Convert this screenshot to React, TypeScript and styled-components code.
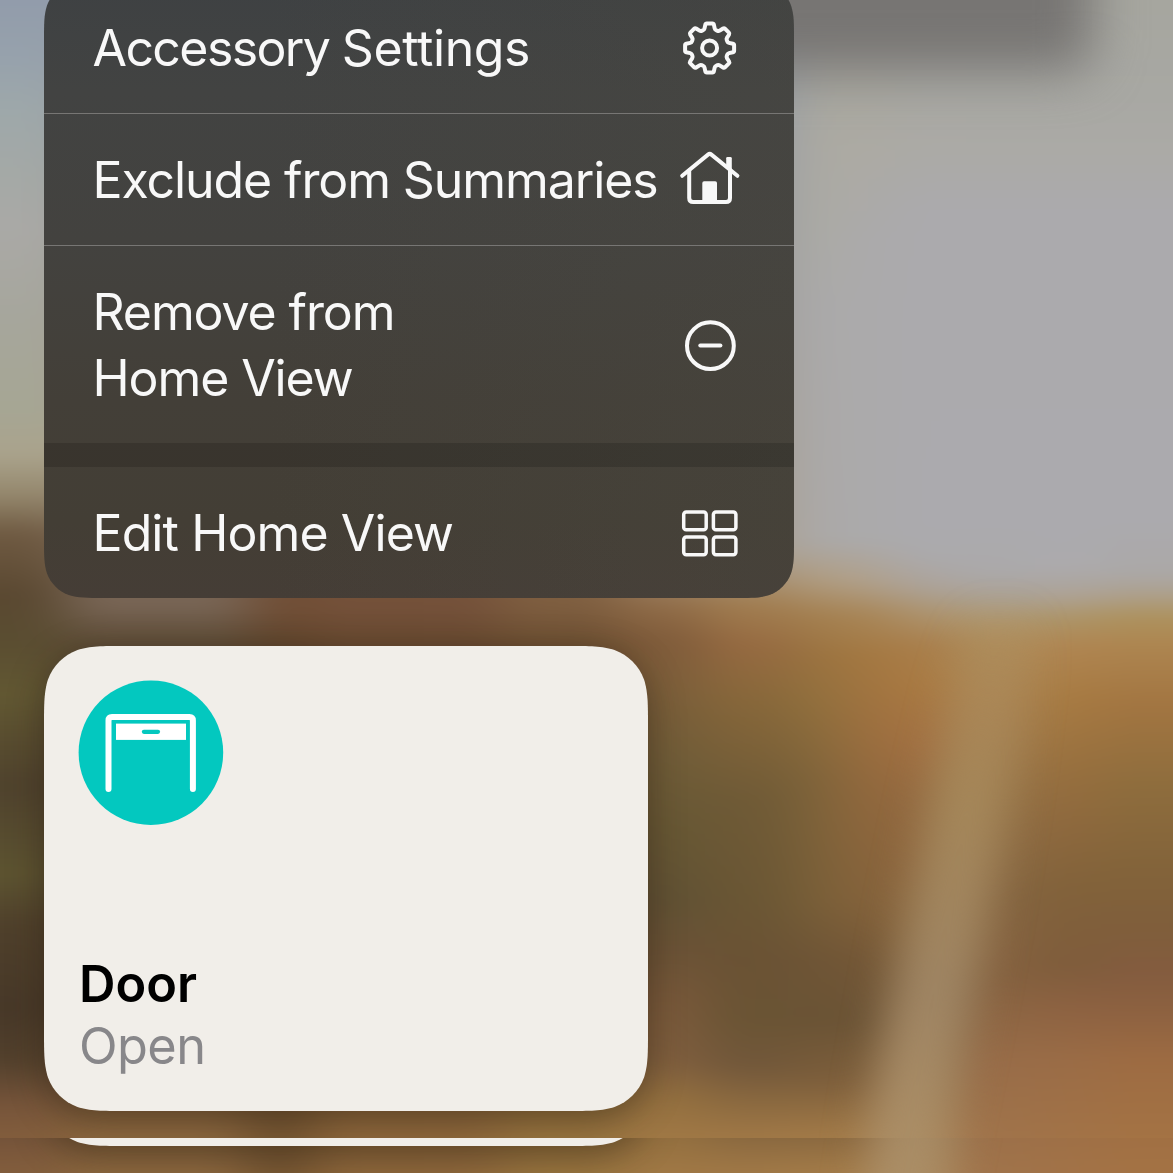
import React, { useId } from 'react';
import styled, { createGlobalStyle } from 'styled-components';

const GlobalStyle = createGlobalStyle`
  html, body { margin: 0; padding: 0; background: #6f5a3c; }
  * { box-sizing: border-box; }
`;

/* Continuous-curvature corner outline, as on iOS panels. */
function squircle(w: number, h: number, r: number): string {
  const a = 1.528665 * r, b = 1.088493 * r, c = 0.868407 * r;
  const d = 0.631494 * r, e = 0.074911 * r, f = 0.372824 * r, g = 0.16906 * r;
  return [
    `M${a} 0 L${w - a} 0`,
    `C${w - b} 0 ${w - c} 0 ${w - d} ${e} C${w - f} ${g} ${w - g} ${f} ${w - e} ${d} C${w} ${c} ${w} ${b} ${w} ${a}`,
    `L${w} ${h - a}`,
    `C${w} ${h - b} ${w} ${h - c} ${w - e} ${h - d} C${w - g} ${h - f} ${w - f} ${h - g} ${w - d} ${h - e} C${w - c} ${h} ${w - b} ${h} ${w - a} ${h}`,
    `L${a} ${h}`,
    `C${b} ${h} ${c} ${h} ${d} ${h - e} C${f} ${h - g} ${g} ${h - f} ${e} ${h - d} C0 ${h - c} 0 ${h - b} 0 ${h - a}`,
    `L0 ${a}`,
    `C0 ${b} 0 ${c} ${e} ${d} C${g} ${f} ${f} ${g} ${d} ${e} C${c} 0 ${b} 0 ${a} 0 Z`,
  ].join(' ');
}

type Stop = [number, string];
interface Band { x: number; w: number; stops: Stop[] }

const sky: Stop[] = [[0, '#a6a69f'], [90, '#a8a8a3'], [150, '#abaaa6'], [210, '#abaaad'], [520, '#abaaae']];

const bands: Band[] = [
  { x: -120, w: 185, stops: [[0, '#929cab'], [60, '#97a2ac'], [110, '#9ea8aa'], [180, '#a5a9a6'], [230, '#aaa9a6'], [320, '#a6a69c'], [410, '#a6a694'], [455, '#aaa38c'], [495, '#94876c'], [533, '#6f5a42'], [595, '#5a4831'], [640, '#5a4d31'], [695, '#625832'], [785, '#4f422d'], [875, '#5d5431'], [925, '#4f402b'], [1010, '#473828'], [1060, '#52402c'], [1105, '#76543a'], [1138, '#825d3c']] },
  { x: 65, w: 185, stops: [[0, '#929cab'], [450, '#aaa38c'], [540, '#7e6a58'], [604, '#786555'], [646, '#5e4c36'], [1000, '#5a452c'], [1138, '#8d683f']] },
  { x: 250, w: 60, stops: [[0, '#929cab'], [540, '#704d36'], [610, '#6f4d34'], [646, '#60452c'], [1000, '#5c452a'], [1138, '#725330']] },
  { x: 310, w: 190, stops: [[0, '#929cab'], [540, '#7a563d'], [610, '#735039'], [650, '#684a30'], [1000, '#6c5030'], [1138, '#8f683c']] },
  { x: 500, w: 120, stops: [[0, '#929cab'], [540, '#8c6c4c'], [610, '#7c5c3e'], [650, '#6d5032'], [1000, '#6c5030'], [1138, '#99753f']] },
  { x: 620, w: 85, stops: [[0, '#929cab'], [560, '#a69078'], [610, '#8e6a46'], [640, '#805c3b'], [690, '#7b5e3a'], [760, '#6f5c38'], [830, '#665734'], [900, '#605134'], [950, '#6a5236'], [1000, '#78583a'], [1060, '#7f5e3e'], [1100, '#94703f'], [1138, '#a07845']] },
  { x: 705, w: 85, stops: [[0, '#929cab'], [555, '#aba090'], [605, '#a17d50'], [645, '#966a41'], [700, '#87673a'], [800, '#6f5a36'], [900, '#6a5634'], [960, '#6a5234'], [1020, '#6a5434'], [1065, '#71573a'], [1105, '#8c6a40'], [1138, '#a07846']] },
  { x: 790, w: 50, stops: [[0, '#a8a69f'], [90, '#a9a8a0'], [150, '#acaaa2'], [230, '#acaba4'], [310, '#abaaaa'], [540, '#aba9a8'], [580, '#b09c80'], [615, '#a48050'], [655, '#9a7340'], [700, '#91703d'], [780, '#7f643a'], [900, '#795f38'], [960, '#6e5536'], [1020, '#6a5335'], [1080, '#7c5e3b'], [1138, '#a37b48']] },
  { x: 840, w: 55, stops: [[0, '#a8a69f'], [90, '#a9a8a0'], [150, '#acaaa3'], [240, '#abaaab'], [540, '#abaaab'], [582, '#b0a08a'], [615, '#a88556'], [655, '#a47841'], [720, '#9d703f'], [790, '#91683d'], [900, '#84623b'], [960, '#745736'], [1020, '#6b5335'], [1080, '#7e5f3b'], [1138, '#a37b48']] },
  { x: 895, w: 60, stops: [...sky, [556, '#abaaad'], [588, '#aca298'], [612, '#ad9470'], [645, '#a97e4b'], [685, '#aa7a42'], [745, '#a37042'], [805, '#936940'], [865, '#8d653d'], [925, '#86643c'], [985, '#785c3b'], [1040, '#806240'], [1138, '#a58055']] },
  { x: 955, w: 80, stops: [...sky, [574, '#aba9aa'], [598, '#aca192'], [622, '#ae956c'], [645, '#ae8c5a'], [700, '#a78150'], [800, '#927045'], [900, '#846440'], [980, '#85613f'], [1060, '#986c48'], [1138, '#a0734a']] },
  { x: 1035, w: 65, stops: [...sky, [565, '#acabae'], [595, '#ada398'], [617, '#ac9569'], [646, '#b08551'], [695, '#a87b42'], [765, '#99703e'], [825, '#8e683d'], [885, '#82623a'], [965, '#7e5c3b'], [1005, '#8c6141'], [1060, '#9a6c46'], [1138, '#a27347']] },
  { x: 1100, w: 200, stops: [...sky, [574, '#aba8a7'], [596, '#ad9f8a'], [616, '#ad925e'], [645, '#ad8550'], [705, '#a27541'], [785, '#8e6d3d'], [865, '#83643a'], [925, '#7f5e3b'], [975, '#845c3f'], [1005, '#8b6040'], [1060, '#9d6b42'], [1138, '#a47344']] },
];

const BackdropSvg = styled.svg<{ $offset: number }>`
  position: absolute;
  left: 0;
  top: ${(p) => -p.$offset}px;
  width: 1173px;
  height: 1173px;
  display: block;
`;

function Backdrop({ offset = 0 }: { offset?: number }) {
  const id = useId().replace(/[^a-zA-Z0-9]/g, '');
  return (
    <BackdropSvg $offset={offset} viewBox="0 0 1173 1173" aria-hidden="true">
      <defs>
        {bands.map((b, i) => (
          <linearGradient key={i} id={`${id}b${i}`} gradientUnits="userSpaceOnUse" x1="0" y1="0" x2="0" y2="1138">
            {b.stops.map(([y, c]) => <stop key={y} offset={y / 1138} stopColor={c} />)}
          </linearGradient>
        ))}
        <linearGradient id={`${id}s`} gradientUnits="userSpaceOnUse" x1="0" y1="610" x2="0" y2="1138">
          <stop offset="0" stopColor="#ae9566" stopOpacity="0" />
          <stop offset="0.15" stopColor="#ae8c5c" stopOpacity="0.6" />
          <stop offset="0.35" stopColor="#a6885a" stopOpacity="0.95" />
          <stop offset="0.72" stopColor="#9e8463" />
          <stop offset="1" stopColor="#ab8e66" />
        </linearGradient>
        <filter id={`${id}f`} filterUnits="userSpaceOnUse" x="-200" y="-200" width="1600" height="1600" colorInterpolationFilters="sRGB">
          <feGaussianBlur stdDeviation="28 8" />
        </filter>
        <filter id={`${id}g`} filterUnits="userSpaceOnUse" x="-200" y="-200" width="1600" height="1600" colorInterpolationFilters="sRGB">
          <feGaussianBlur stdDeviation="20" />
        </filter>
        <filter id={`${id}h`} filterUnits="userSpaceOnUse" x="-200" y="-200" width="1600" height="1600" colorInterpolationFilters="sRGB">
          <feGaussianBlur stdDeviation="25" />
        </filter>
      </defs>
      <g filter={`url(#${id}f)`}>
        {bands.map((b, i) => (
          <rect key={i} x={b.x} y="-100" width={b.w + 1} height="1400" fill={`url(#${id}b${i})`} />
        ))}
      </g>
      <path d="M976 600 L1034 600 Q1001 900 926 1230 L854 1230 Q896 930 976 600Z" fill={`url(#${id}s)`} filter={`url(#${id}g)`} />
      <rect x="600" y="-160" width="492" height="230" rx="24" fill="#777573" filter={`url(#${id}h)`} />
    </BackdropSvg>
  );
}

const Screen = styled.main`
  width: 1173px;
  height: 1173px;
  display: flex;
  flex-direction: column;
  overflow: hidden;
  font-family: Inter, 'Liberation Sans', sans-serif;
`;

const Pane = styled.section<{ $height: number }>`
  position: relative;
  flex: none;
  height: ${(p) => p.$height}px;
  padding-left: 44px;
  overflow: hidden;
`;

const Stack = styled.div<{ $shift: number }>`
  position: relative;
  display: flex;
  flex-direction: column;
  align-items: flex-start;
  gap: 48px;
  margin-top: ${(p) => p.$shift}px;
`;

const Menu = styled.ul`
  list-style: none;
  margin: 0;
  padding: 0;
  width: 750px;
  height: 617px;
  display: flex;
  flex-direction: column;
  color: #f8f8f8;
  background:
    linear-gradient(90deg, rgba(74, 72, 62, 0) 30%, rgba(75, 73, 65, 0.36)),
    linear-gradient(180deg, #3e4143 0, #424342 110px, #43423f 260px, #433f38 420px, #433e35 540px, #453d36 617px);
  clip-path: path('${squircle(750, 617, 39)}');
`;

const MenuItem = styled.li<{ $height: number; $divided?: boolean; $inset?: number }>`
  flex: none;
  height: ${(p) => p.$height}px;
  padding: ${(p) => p.$inset ?? 0}px 54px 0 49px;
  display: flex;
  align-items: center;
  justify-content: space-between;
  border-bottom: ${(p) => (p.$divided ? '1px solid #777674' : '0')};
`;

const MenuGap = styled.li`
  flex: none;
  height: 24px;
  background: rgba(0, 0, 0, 0.15);
`;

const Label = styled.span<{ $tracking?: number }>`
  font-size: 50px;
  line-height: 66px;
  font-weight: 400;
  letter-spacing: ${(p) => p.$tracking ?? -1.1}px;
  margin-left: -0.5px;
  white-space: pre;
`;

const Word = styled.span<{ $tracking: number }>`
  letter-spacing: ${(p) => p.$tracking}px;
`;

const Glyph = styled.svg<{ $stroke?: number }>`
  flex: none;
  width: 60px;
  height: 60px;
  display: block;
  overflow: visible;
  fill: none;
  stroke: #f8f8f8;
  stroke-width: ${(p) => p.$stroke ?? 4};
  stroke-linecap: round;
  stroke-linejoin: round;
`;

const CardShadow = styled.div`
  filter: drop-shadow(0 8px 18px rgba(20, 14, 4, 0.38));
`;

const Card = styled.article`
  width: 604px;
  height: 465px;
  padding: 34px 35px;
  display: flex;
  flex-direction: column;
  justify-content: space-between;
  background: #f1eee9;
  clip-path: path('${squircle(604, 465, 53)}');
`;

const Badge = styled.svg`
  display: block;
  width: 145px;
  height: 145px;
  overflow: visible;
`;

const CardText = styled.div`
  display: flex;
  flex-direction: column;
  font-size: 50.5px;
  line-height: 62px;
`;

const Name = styled.span`
  font-weight: 600;
  color: #000;
  letter-spacing: 0;
`;

const Status = styled.span`
  color: #88878a;
  letter-spacing: -0.6px;
`;

function gearOutline(): string {
  const pts: [number, number][] = [];
  const tooth: [number, number][] = [[-5.4, -18.2], [-4, -24.5], [4, -24.5], [5.4, -18.2]];
  for (let i = 0; i < 8; i++) {
    const t = (i * Math.PI) / 4;
    tooth.forEach(([x, y]) => pts.push([
      29.6 + x * Math.cos(t) - y * Math.sin(t),
      30 + x * Math.sin(t) + y * Math.cos(t),
    ]));
  }
  const n = pts.length;
  const toward = (a: [number, number], b: [number, number], d: number) => {
    const l = Math.hypot(b[0] - a[0], b[1] - a[1]);
    const k = Math.min(d / l, 0.5);
    return `${(a[0] + (b[0] - a[0]) * k).toFixed(2)} ${(a[1] + (b[1] - a[1]) * k).toFixed(2)}`;
  };
  return pts.map((p, i) => {
    const prev = pts[(i + n - 1) % n], next = pts[(i + 1) % n];
    return `${i ? 'L' : 'M'}${toward(p, prev, 1.2)} Q${p[0].toFixed(2)} ${p[1].toFixed(2)} ${toward(p, next, 1.2)}`;
  }).join(' ') + 'Z';
}

const GearIcon = () => (
  <Glyph viewBox="0 0 60 60">
    <path d={gearOutline()} />
    <circle cx="29.6" cy="30" r="7.5" />
  </Glyph>
);

const HouseIcon = () => (
  <Glyph viewBox="0 0 60 60">
    <path d="M2.2 25.8 L28 4.6 Q29.7 3.2 31.4 4.6 L57.4 25.8" />
    <path d="M9.2 20.6 V48 Q9.2 52 13.2 52 H46 Q50 52 50 48 V20.6" />
    <path d="M46.2 18 V8.2 Q46.2 6.9 47.5 6.9 H50.4 Q51.8 6.9 51.8 8.2 V22Z" fill="#f8f8f8" stroke="none" />
    <path d="M22.3 52 V33 Q22.3 31.2 24.1 31.2 H35.2 Q37 31.2 37 33 V52Z" fill="#f8f8f8" stroke="none" />
  </Glyph>
);

const MinusIcon = () => (
  <Glyph viewBox="0 0 60 60">
    <circle cx="30.4" cy="30.7" r="23.4" />
    <path d="M20.3 30.6 H40.4" />
  </Glyph>
);

const TilesIcon = () => (
  <Glyph viewBox="0 0 60 60" $stroke={3.5}>
    {[3.7, 33.4].map((x) => [9, 33.9].map((y) => (
      <rect key={`${x}-${y}`} x={x} y={y} width="22.5" height="17.8" rx="2.6" />
    )))}
  </Glyph>
);

export default function App() {
  return (
    <>
      <GlobalStyle />
      <Screen>
        <Pane $height={1138}>
          <Backdrop />
          <Stack $shift={-19}>
            <Menu>
              <MenuItem $height={133} $divided $inset={2}>
                <Label><Word $tracking={-1.6}>Accessory </Word><Word $tracking={-0.4}>Settings</Word></Label>
                <GearIcon />
              </MenuItem>
              <MenuItem $height={132} $divided><Label>Exclude from Summaries</Label><HouseIcon /></MenuItem>
              <MenuItem $height={197}><Label>{'Remove from\nHome View'}</Label><MinusIcon /></MenuItem>
              <MenuGap />
              <MenuItem $height={131}><Label $tracking={-0.9}>Edit Home View</Label><TilesIcon /></MenuItem>
            </Menu>
            <CardShadow>
              <Card>
                <Badge viewBox="0 0 145 145">
                  <circle cx="71.9" cy="72.7" r="72.3" fill="#03c8bf" />
                  <path d="M29.5 109 V40.5 Q29.5 37 33 37 H110.4 Q113.9 37 113.9 40.5 V109" fill="none" stroke="#fff" strokeWidth="6" strokeLinecap="round" />
                  <rect x="37" y="43.6" width="70" height="16.3" fill="#fff" />
                  <rect x="62.8" y="49.7" width="18.3" height="4.2" rx="2.1" fill="#03c8bf" />
                </Badge>
                <CardText>
                  <Name>Door</Name>
                  <Status>Open</Status>
                </CardText>
              </Card>
            </CardShadow>
          </Stack>
        </Pane>
        <Pane $height={35}>
          <Backdrop offset={1103} />
          <Stack $shift={-457}>
            <CardShadow><Card /></CardShadow>
          </Stack>
        </Pane>
      </Screen>
    </>
  );
}
